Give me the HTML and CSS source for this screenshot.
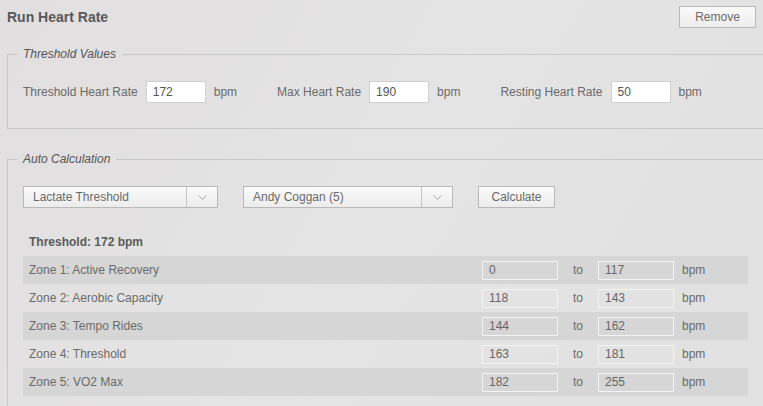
FILE: index.html
```html
<!DOCTYPE html>
<html lang="en">
<head>
<meta charset="utf-8">
<title>Run Heart Rate</title>
<link rel="stylesheet" href="styles.css">
</head>
<body>
<div class="page">
  <header class="header">
    <h1 class="title">Run Heart Rate</h1>
    <button class="btn btn-remove" type="button">Remove</button>
  </header>

  <fieldset class="group group-threshold">
    <legend class="group-legend">Threshold Values</legend>
    <div class="values-row">
      <label class="value-field">
        <span class="value-label">Threshold Heart Rate</span>
        <input class="text-input" type="text" value="172">
        <span class="unit">bpm</span>
      </label>
      <label class="value-field">
        <span class="value-label">Max Heart Rate</span>
        <input class="text-input" type="text" value="190">
        <span class="unit">bpm</span>
      </label>
      <label class="value-field">
        <span class="value-label">Resting Heart Rate</span>
        <input class="text-input" type="text" value="50">
        <span class="unit">bpm</span>
      </label>
    </div>
  </fieldset>

  <fieldset class="group group-auto">
    <legend class="group-legend">Auto Calculation</legend>
    <div class="controls-row">
      <div class="select select-method">
        <span class="select-text">Lactate Threshold</span>
        <span class="select-arrow"><svg width="9" height="5" viewBox="0 0 9 5"><polyline points="0.5,0.5 4.5,4.3 8.5,0.5" fill="none" stroke="#a8a8a8" stroke-width="1"/></svg></span>
      </div>
      <div class="select select-model">
        <span class="select-text">Andy Coggan (5)</span>
        <span class="select-arrow"><svg width="9" height="5" viewBox="0 0 9 5"><polyline points="0.5,0.5 4.5,4.3 8.5,0.5" fill="none" stroke="#a8a8a8" stroke-width="1"/></svg></span>
      </div>
      <button class="btn btn-calc" type="button">Calculate</button>
    </div>

    <div class="zones-heading">Threshold: 172 bpm</div>
    <div class="zones">
      <div class="zone zone-alt">
        <span class="zone-name">Zone 1: Active Recovery</span>
        <input class="zone-input" type="text" value="0" readonly>
        <span class="zone-to">to</span>
        <input class="zone-input" type="text" value="117" readonly>
        <span class="zone-unit">bpm</span>
      </div>
      <div class="zone">
        <span class="zone-name">Zone 2: Aerobic Capacity</span>
        <input class="zone-input" type="text" value="118" readonly>
        <span class="zone-to">to</span>
        <input class="zone-input" type="text" value="143" readonly>
        <span class="zone-unit">bpm</span>
      </div>
      <div class="zone zone-alt">
        <span class="zone-name">Zone 3: Tempo Rides</span>
        <input class="zone-input" type="text" value="144" readonly>
        <span class="zone-to">to</span>
        <input class="zone-input" type="text" value="162" readonly>
        <span class="zone-unit">bpm</span>
      </div>
      <div class="zone">
        <span class="zone-name">Zone 4: Threshold</span>
        <input class="zone-input" type="text" value="163" readonly>
        <span class="zone-to">to</span>
        <input class="zone-input" type="text" value="181" readonly>
        <span class="zone-unit">bpm</span>
      </div>
      <div class="zone zone-alt">
        <span class="zone-name">Zone 5: VO2 Max</span>
        <input class="zone-input" type="text" value="182" readonly>
        <span class="zone-to">to</span>
        <input class="zone-input" type="text" value="255" readonly>
        <span class="zone-unit">bpm</span>
      </div>
    </div>
  </fieldset>
</div>
</body>
</html>
```

FILE: styles.css
```css
html, body {
  margin: 0;
  padding: 0;
  overflow: hidden;
}

body {
  background: linear-gradient(120deg, #e1dfdf 0%, #e5e4e4 50%, #e2e1e1 100%);
  font-family: "Liberation Sans", Arial, sans-serif;
  font-size: 12px;
  color: #666;
  height: 406px;
}

.page {
  width: 763px;
}

.header {
  display: flex;
  justify-content: space-between;
  align-items: center;
  padding: 6px 7px 0 7px;
}

.title {
  margin: 0;
  font-size: 14px;
  font-weight: bold;
  color: #585858;
  line-height: 22px;
}

.btn {
  font-family: "Liberation Sans", Arial, sans-serif;
  font-size: 12px;
  color: #6a6a6a;
  background: linear-gradient(#fbfbfb, #ececec);
  border: 1px solid #b9b9b9;
  border-radius: 0;
  height: 22px;
  padding: 0;
  margin: 0;
}

.btn-remove {
  width: 77px;
}

.group {
  margin: 0 -20px 0 7px;
  padding: 0;
  border: 1px solid #c9c8c8;
  min-inline-size: 0;
}

.group-legend {
  margin-left: -6px;
  padding: 0 6px;
  font-style: italic;
  font-size: 12px;
  line-height: 14px;
  color: #555;
}

.group-threshold {
  margin-top: 19px;
  padding: 20px 0 25px 15px;
}

.values-row {
  display: flex;
  gap: 40px;
}

.value-field {
  display: flex;
  align-items: center;
  gap: 8px;
}

.value-label, .unit {
  color: #6a6a6a;
}

.text-input {
  width: 60px;
  height: 22px;
  box-sizing: border-box;
  border: 1px solid #cfcfcf;
  background: #fff;
  padding: 0 6px;
  margin: 0;
  font-family: "Liberation Sans", Arial, sans-serif;
  font-size: 12px;
  color: #555;
  outline: none;
}

.group-auto {
  margin-top: 23px;
  padding: 20px 0 10px 15px;
}

.controls-row {
  display: flex;
  gap: 25px;
}

.select {
  display: flex;
  height: 22px;
  box-sizing: border-box;
  border: 1px solid #b9b9b9;
  background: linear-gradient(#fbfbfb, #ececec);
}

.select-method {
  width: 195px;
}

.select-model {
  width: 210px;
}

.select-text {
  flex: 1;
  padding-left: 9px;
  line-height: 20px;
  color: #6a6a6a;
}

.select-arrow {
  width: 30px;
  border-left: 1px solid #c6c6c6;
  display: flex;
  align-items: center;
  justify-content: center;
}

.btn-calc {
  width: 77px;
}

.zones-heading {
  margin: 27px 0 7px 6px;
  font-weight: bold;
  line-height: 14px;
  color: #5a5a5a;
}

.zones {
  width: 725px;
}

.zone {
  display: flex;
  align-items: center;
  height: 28px;
}

.zone-alt {
  background: #d6d6d6;
}

.zone-name {
  flex: 1;
  padding-left: 6px;
  color: #6a6a6a;
}

.zone-input {
  width: 76px;
  height: 19px;
  box-sizing: border-box;
  border: 1px solid #f3f3f3;
  background: transparent;
  padding: 0 6px;
  margin: 0;
  font-family: "Liberation Sans", Arial, sans-serif;
  font-size: 12px;
  color: #666;
  outline: none;
}

.zone-to {
  width: 40px;
  text-align: center;
  color: #6a6a6a;
}

.zone-unit {
  width: 74px;
  box-sizing: border-box;
  padding-left: 8px;
  color: #6a6a6a;
}
```
